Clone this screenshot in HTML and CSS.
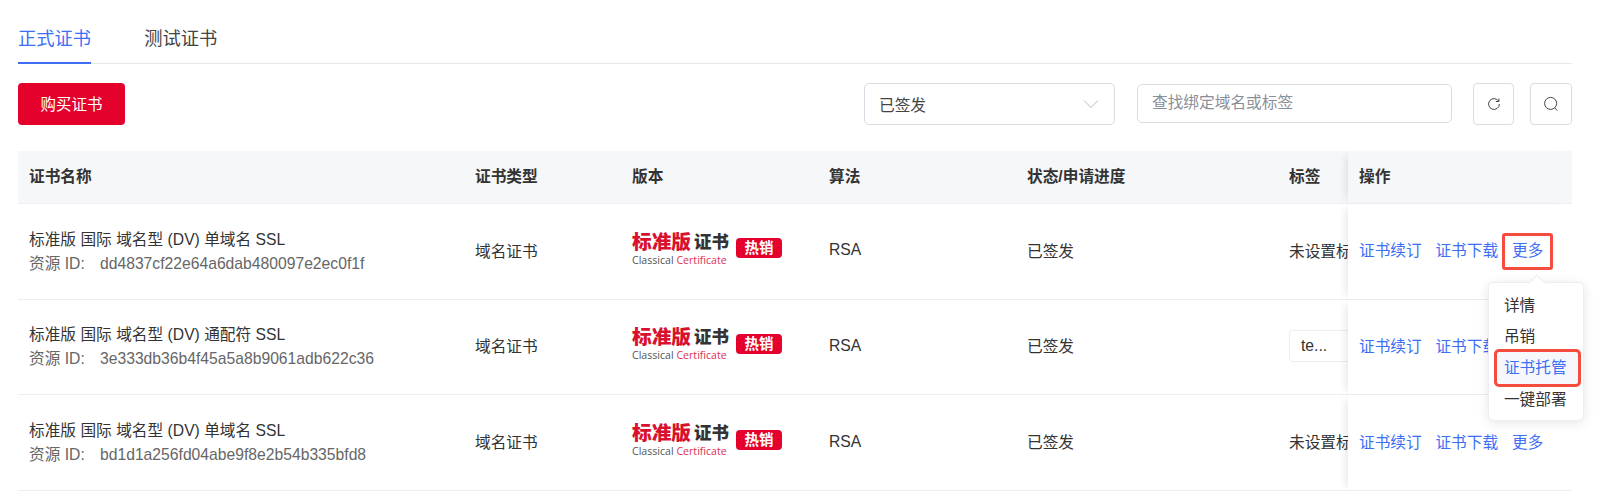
FILE: index.html
```html
<!DOCTYPE html>
<html lang="zh-CN">
<head>
    <meta charset="UTF-8">
    <title>SSL 证书</title>
    <link rel="stylesheet" href="styles.css">
</head>
<body>

<div class="tabs">
    <a class="tab active">正式证书</a>
    <a class="tab">测试证书</a>
</div>

<div class="toolbar">
    <button class="btn-buy">购买证书</button>
    <div class="filters">
        <div class="select">
            <span>已签发</span>
            <svg class="chevron" width="16" height="10" viewBox="0 0 16 10"><path d="M1 1.5 8 8.5 15 1.5" fill="none" stroke="#b4b8c0" stroke-width="1"/></svg>
        </div>
        <div class="search-input">查找绑定域名或标签</div>
        <button class="btn-icon">
            <svg width="16" height="16" viewBox="0 0 16 16"><path d="M12.6 5.2A5.4 5.4 0 1 0 13.4 8" fill="none" stroke="#444" stroke-width="1"/><path d="M12.9 2.4V5.5H9.9" fill="none" stroke="#444" stroke-width="1"/></svg>
        </button>
        <button class="btn-icon btn-search">
            <svg width="16" height="16" viewBox="0 0 16 16"><circle cx="7.6" cy="7.4" r="6" fill="none" stroke="#444" stroke-width="1"/><path d="M11.6 11.8 14.4 14.6" fill="none" stroke="#444" stroke-width="1"/></svg>
        </button>
    </div>
</div>

<table class="cert-table">
    <colgroup>
        <col class="col-name">
        <col class="col-type">
        <col class="col-version">
        <col class="col-algo">
        <col class="col-status">
        <col class="col-tag">
        <col class="col-ops">
    </colgroup>
    <thead>
        <tr>
            <th>证书名称</th>
            <th>证书类型</th>
            <th>版本</th>
            <th>算法</th>
            <th>状态/申请进度</th>
            <th>标签</th>
            <th class="ops">操作</th>
        </tr>
    </thead>
    <tbody>
        <tr>
            <td>
                <div class="cert-title">标准版 国际 域名型 (DV) 单域名 SSL</div>
                <div class="cert-id"><span class="id-label">资源 ID:</span>dd4837cf22e64a6dab480097e2ec0f1f</div>
            </td>
            <td>域名证书</td>
            <td>
                <div class="version">
                    <div class="logo">
                        <div class="logo-name"><b>标准版</b><strong>证书</strong></div>
                        <div class="logo-en">Classical <em>Certificate</em></div>
                    </div>
                    <span class="hot">热销</span>
                </div>
            </td>
            <td>RSA</td>
            <td>已签发</td>
            <td class="tag-cell"><div class="tag-text">未设置标签</div></td>
            <td class="ops">
                <div class="links">
                    <a>证书续订</a>
                    <a>证书下载</a>
                    <span class="more">
                        <a class="more-link">更多</a>
                        <div class="menu">
                            <a class="menu-item">详情</a>
                            <a class="menu-item">吊销</a>
                            <a class="menu-item current">证书托管</a>
                            <a class="menu-item">一键部署</a>
                        </div>
                    </span>
                </div>
            </td>
        </tr>
        <tr>
            <td>
                <div class="cert-title">标准版 国际 域名型 (DV) 通配符 SSL</div>
                <div class="cert-id"><span class="id-label">资源 ID:</span>3e333db36b4f45a5a8b9061adb622c36</div>
            </td>
            <td>域名证书</td>
            <td>
                <div class="version">
                    <div class="logo">
                        <div class="logo-name"><b>标准版</b><strong>证书</strong></div>
                        <div class="logo-en">Classical <em>Certificate</em></div>
                    </div>
                    <span class="hot">热销</span>
                </div>
            </td>
            <td>RSA</td>
            <td>已签发</td>
            <td class="tag-cell"><span class="tag-box">te...</span></td>
            <td class="ops">
                <div class="links">
                    <a>证书续订</a>
                    <a>证书下载</a>
                    <a>更多</a>
                </div>
            </td>
        </tr>
        <tr>
            <td>
                <div class="cert-title">标准版 国际 域名型 (DV) 单域名 SSL</div>
                <div class="cert-id"><span class="id-label">资源 ID:</span>bd1d1a256fd04abe9f8e2b54b335bfd8</div>
            </td>
            <td>域名证书</td>
            <td>
                <div class="version">
                    <div class="logo">
                        <div class="logo-name"><b>标准版</b><strong>证书</strong></div>
                        <div class="logo-en">Classical <em>Certificate</em></div>
                    </div>
                    <span class="hot">热销</span>
                </div>
            </td>
            <td>RSA</td>
            <td>已签发</td>
            <td class="tag-cell"><div class="tag-text">未设置标签</div></td>
            <td class="ops">
                <div class="links">
                    <a>证书续订</a>
                    <a>证书下载</a>
                    <a>更多</a>
                </div>
            </td>
        </tr>
    </tbody>
</table>

</body>
</html>
```

FILE: styles.css
```css
* {
    box-sizing: border-box;
}
body {
    margin: 0;
    padding: 0 25px 0 18px;
    height: 491px;
    overflow: hidden;
    background: #fff;
    color: #333;
    font-family: "Liberation Sans", "Noto Sans CJK SC", sans-serif;
    font-size: 15.7px;
}
.tabs {
    display: flex;
    gap: 53px;
    height: 64px;
    padding-top: 25px;
    border-bottom: 1px solid #e6e8ec;
}
.tab {
    height: 39px;
    font-size: 18.3px;
    line-height: 28px;
    color: #444;
}
.tab.active {
    color: #3d6ff5;
    border-bottom: 2px solid #3d6ff5;
}
.toolbar {
    display: flex;
    justify-content: space-between;
    align-items: flex-start;
    height: 87px;
    padding-top: 19px;
}
.btn-buy {
    width: 107px;
    height: 42px;
    border: none;
    border-radius: 4px;
    background: #e4022d;
    color: #fff;
    font-family: inherit;
    font-size: 15.5px;
    padding-bottom: 3px;
}
.filters {
    display: flex;
    align-items: flex-start;
    gap: 22px;
}
.select {
    display: flex;
    justify-content: space-between;
    align-items: center;
    width: 251px;
    height: 42px;
    padding: 0 15px 0 14px;
    border: 1px solid #d9dce3;
    border-radius: 5px;
    color: #444;
}
.search-input {
    width: 315px;
    height: 39px;
    margin-top: 1px;
    margin-right: -1px;
    padding: 0 14px;
    border: 1px solid #d9dce3;
    border-radius: 5px;
    color: #8a8f99;
    line-height: 35px;
}
.btn-icon {
    display: flex;
    align-items: center;
    justify-content: center;
    width: 41px;
    height: 42px;
    padding: 0;
    border: 1px solid #d9dce3;
    border-radius: 4px;
    background: #fff;
}
.btn-search {
    width: 42px;
    margin-left: -6px;
}
.cert-table {
    width: 1554px;
    table-layout: fixed;
    border-collapse: separate;
    border-spacing: 0;
}
.col-name { width: 446px; }
.col-type { width: 157px; }
.col-version { width: 197px; }
.col-algo { width: 198px; }
.col-status { width: 262px; }
.col-tag { width: 70px; }
.col-ops { width: 224px; }
th {
    height: 53px;
    padding: 0 11px 3px;
    background: #f6f7f9;
    border-bottom: 1px solid #eceef3;
    text-align: left;
    font-weight: 700;
    color: #333;
}
td {
    height: 95.67px;
    padding: 0 11px 2px;
    border-bottom: 1px solid #eceef3;
    vertical-align: middle;
}
.ops {
    position: relative;
    background: #fff;
    box-shadow: -7px 0 8px -5px rgba(0, 0, 0, 0.1);
}
th.ops {
    background: #f6f7f9;
}
.cert-title {
    margin-top: 2px;
    line-height: 25px;
    color: #333;
}
.cert-id {
    line-height: 24px;
    color: #666;
}
.id-label {
    display: inline-block;
    width: 71px;
}
.version {
    display: flex;
    align-items: center;
    gap: 7px;
    margin-bottom: 4px;
}
.logo-name {
    display: flex;
    align-items: center;
    gap: 3px;
    height: 23px;
    line-height: 23px;
}
.logo-name b {
    font-size: 19.7px;
    font-weight: 900;
    color: #d8112f;
}
.logo-name strong {
    font-size: 17.5px;
    font-weight: 900;
    color: #333;
}
.logo-en {
    font-family: "Open Sans", sans-serif;
    font-size: 10.6px;
    line-height: 12px;
    white-space: nowrap;
    color: #555;
}
.logo-en em {
    font-style: normal;
    color: #e0314f;
}
.hot {
    width: 46px;
    height: 20px;
    border-radius: 4px;
    background: #e4022d;
    color: #fff;
    font-size: 14.5px;
    font-weight: 700;
    line-height: 20px;
    text-align: center;
}
.tag-cell {
    overflow: hidden;
    white-space: nowrap;
}
.tag-box {
    display: inline-block;
    width: 90px;
    height: 32px;
    padding: 0 11px;
    border: 1px solid #eceef3;
    border-radius: 3px;
    line-height: 30px;
}
.links {
    display: flex;
    gap: 13.7px;
    margin-top: 2px;
    line-height: 20px;
    color: #3d6ff5;
}
.more {
    position: relative;
}
.more-link {
    display: block;
    position: relative;
}
.more-link::after {
    content: "";
    position: absolute;
    top: -8px;
    right: -10px;
    bottom: -9px;
    left: -10px;
    border: 3px solid #f44c3f;
    border-radius: 3px;
}
.menu {
    position: absolute;
    z-index: 10;
    top: 41px;
    left: -24px;
    width: 96px;
    padding: 6.5px 5px 4.5px 8px;
    background: #fff;
    border: 1px solid #eceef3;
    border-radius: 5px;
    box-shadow: 0 2px 12px rgba(0, 0, 0, 0.1);
    color: #333;
}
.menu::before {
    content: "";
    position: absolute;
    top: -6px;
    left: 42px;
    width: 11px;
    height: 11px;
    background: #fff;
    border-top: 1px solid #eceef3;
    border-left: 1px solid #eceef3;
    transform: rotate(45deg);
}
.menu-item {
    display: block;
    position: relative;
    height: 31.3px;
    padding-left: 7px;
    line-height: 31px;
    white-space: nowrap;
}
.menu-item.current {
    background: #f5f7fa;
    color: #3d6ff5;
    outline: 3px solid #f44c3f;
    border-radius: 2px;
}
```
